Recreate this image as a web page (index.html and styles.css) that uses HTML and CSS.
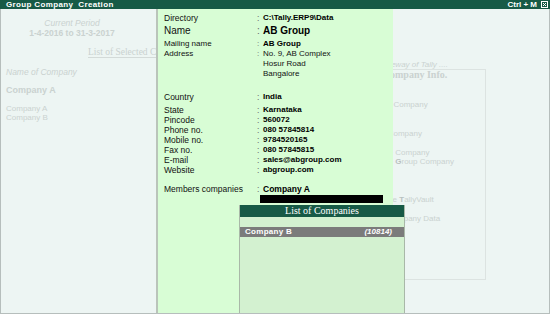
FILE: index.html
```html
<!DOCTYPE html>
<html lang="en">
<head>
    <meta charset="UTF-8">
    <title>Group Company Creation</title>
    <link rel="stylesheet" href="styles.css">
</head>
<body>
<!-- title bar -->
<div class="title-bar">
    <div class="title">Group Company&nbsp; Creation</div>
    <div class="shortcut">
        <span>Ctrl + M</span>
        <span class="close-btn">
            <svg width="7" height="7" viewBox="0 0 7 7">
                <rect x="0.5" y="0.5" width="6" height="6" fill="none" stroke="#ffffff" stroke-width="1"/>
                <path d="M2 2 L5 5 M5 2 L2 5" stroke="#ffffff" stroke-width="1"/>
            </svg>
        </span>
    </div>
</div>

<div class="screen">
    <!-- faded Gateway of Tally underneath -->
    <div class="bg">
        <div class="bg-left">
            <div class="period">
                <div class="muted-italic">Current Period</div>
                <div class="muted-bold">1-4-2016 to 31-3-2017</div>
            </div>
            <div class="selected-title"><span>List of Selected Co</span></div>
            <div class="muted-italic name-head">Name of Company</div>
            <div class="muted-bold current-co">Company A</div>
            <div class="co-list">
                <div>Company A</div>
                <div>Company B</div>
            </div>
        </div>
        <div class="bg-right">
            <div class="gateway-title">Gateway of <i>Tally</i> ....</div>
            <div class="gateway-box">
                <div class="gateway-head">Company Info.</div>
                <div class="menu">
                    <div>Select Company</div>
                    <div>&nbsp;</div>
                    <div>&nbsp;</div>
                    <div>Shut Company</div>
                    <div>&nbsp;</div>
                    <div>Create Company</div>
                    <div>Create <b>G</b>roup Company</div>
                    <div>&nbsp;</div>
                    <div>Alter</div>
                    <div>&nbsp;</div>
                    <div>Change <b>T</b>allyVault</div>
                    <div>&nbsp;</div>
                    <div>Split Company Data</div>
                </div>
            </div>
        </div>
    </div>

    <!-- group company form -->
    <div class="panel">
        <div class="row"><span>Directory</span><span>:</span><b>C:\Tally.ERP9\Data</b></div>
        <div class="row big"><span>Name</span><span>:</span><b>AB Group</b></div>
        <div class="address">
            <div class="row"><span>Mailing name</span><span>:</span><b>AB Group</b></div>
            <div class="row"><span>Address</span><span>:</span><span>No. 9, AB Complex</span></div>
            <div class="row"><span></span><span></span><span>Hosur Road</span></div>
            <div class="row"><span></span><span></span><span>Bangalore</span></div>
        </div>
        <div class="row country"><span>Country</span><span>:</span><b>India</b></div>
        <div class="contact">
            <div class="row"><span>State</span><span>:</span><b>Karnataka</b></div>
            <div class="row"><span>Pincode</span><span>:</span><b>560072</b></div>
            <div class="row"><span>Phone no.</span><span>:</span><b>080 57845814</b></div>
            <div class="row"><span>Mobile no.</span><span>:</span><b>9784520165</b></div>
            <div class="row"><span>Fax no.</span><span>:</span><b>080 57845815</b></div>
            <div class="row"><span>E-mail</span><span>:</span><b>sales@abgroup.com</b></div>
            <div class="row"><span>Website</span><span>:</span><b>abgroup.com</b></div>
        </div>
        <div class="row members"><span>Members companies</span><span>:</span><b>Company A</b></div>
        <div class="row"><span></span><span></span><div class="input-bar"></div></div>
    </div>

    <!-- popup list -->
    <div class="popup">
        <div class="popup-head">List of Companies</div>
        <div class="popup-item">
            <span>Company B</span>
            <i>(10814)</i>
        </div>
    </div>
</div>
</body>
</html>
```

FILE: styles.css
```css
* {
    margin: 0;
    padding: 0;
    box-sizing: border-box;
}

body {
    font-family: 'Liberation Sans', Arial, sans-serif;
    width: 550px;
    height: 314px;
    overflow: hidden;
    background: #edf5f3;
}

/* title bar */
.title-bar {
    height: 9px;
    background: #175a46;
    color: #ffffff;
    display: flex;
    justify-content: space-between;
    align-items: center;
    padding: 0 2px 0 6px;
    font-size: 8px;
    font-weight: bold;
    line-height: 9px;
}

.title {
    letter-spacing: 0.35px;
}

.shortcut {
    display: flex;
    align-items: center;
    gap: 4px;
}

.close-btn {
    display: flex;
}

/* screen frame */
.screen {
    position: relative;
    height: 305px;
    border-left: 1px solid #b6bebc;
    border-right: 1px solid #b6bebc;
    border-bottom: 1px solid #b6bebc;
}

.bg {
    display: flex;
    height: 100%;
    color: #cad2d0;
    font-size: 8.5px;
    line-height: 10px;
}

/* left half is covered by the form from x=156 on */
.bg-left {
    width: 274px;
    padding-top: 9px;
}

.period {
    width: 142px;
    text-align: center;
}

.muted-italic {
    font-style: italic;
}

.muted-bold {
    font-weight: bold;
}

.selected-title {
    margin: 9px 0 0 87px;
    font-family: 'Liberation Serif', 'Times New Roman', serif;
    font-size: 9.5px;
    border-bottom: 1px solid #d3dad8;
    white-space: nowrap;
}

.name-head {
    margin: 9px 0 0 5px;
}

.current-co {
    margin: 8px 0 0 5px;
    font-size: 9px;
}

.co-list {
    margin: 9px 0 0 5px;
    line-height: 9px;
    font-size: 8px;
}

.bg-right {
    flex: 1;
    padding: 51px 0 0 65px;
}

.gateway-title {
    width: 146px;
    text-align: center;
    font-style: italic;
    line-height: 9px;
    font-size: 8px;
}

.gateway-box {
    width: 146px;
    height: 211px;
    border: 1px solid #dce3e1;
}

.gateway-head {
    text-align: center;
    font-family: 'Liberation Serif', 'Times New Roman', serif;
    font-weight: bold;
    font-size: 10px;
    padding-left: 4px;
}

.menu {
    padding: 20px 0 0 28px;
    font-size: 8px;
    line-height: 9.5px;
    white-space: nowrap;
}

.menu b {
    color: #b9c1bf;
}

/* form panel */
.panel {
    position: absolute;
    left: 155px;
    top: 0;
    bottom: 0;
    width: 237px;
    background: #d8fdd5;
    border-left: 2px solid #bac4ba;
    padding: 4px 0 0 6px;
    color: #111111;
    font-size: 8.5px;
}

.row {
    display: grid;
    grid-template-columns: 93px 6px 1fr;
    line-height: 10px;
    white-space: nowrap;
}

.row > span:nth-child(2) {
    color: #666666;
}

.row b {
    font-size: 8px;
    color: #000000;
}

.row.big {
    margin-top: 1px;
    font-size: 10px;
    line-height: 14px;
}

.row.big b {
    font-size: 10px;
}

.address {
    margin-top: 1px;
    font-size: 8px;
}

.row.country {
    margin-top: 13px;
}

.contact {
    margin-top: 3px;
}

.row.members {
    margin-top: 9px;
}

.row.members b {
    font-size: 8.5px;
}

.input-bar {
    margin-left: -3px;
    width: 123px;
    height: 8px;
    margin-top: 1px;
    background: #000000;
}

/* popup list */
.popup {
    position: absolute;
    left: 238px;
    top: 196px;
    bottom: 0;
    width: 166px;
    background: #d3f1d0;
    border-left: 1px solid #a9b8a8;
    border-right: 1px solid #a9b8a8;
}

.popup-head {
    height: 12px;
    background: #175a46;
    color: #ffffff;
    text-align: center;
    font-family: 'Liberation Serif', 'Times New Roman', serif;
    font-size: 10px;
    line-height: 12px;
}

.popup-item {
    margin-top: 10px;
    height: 10px;
    background: #7b7b7b;
    color: #ffffff;
    display: flex;
    justify-content: space-between;
    padding: 0 12px 0 5px;
    font-size: 8px;
    font-weight: bold;
    line-height: 10px;
}

.popup-item span {
    letter-spacing: 0.3px;
}
```
